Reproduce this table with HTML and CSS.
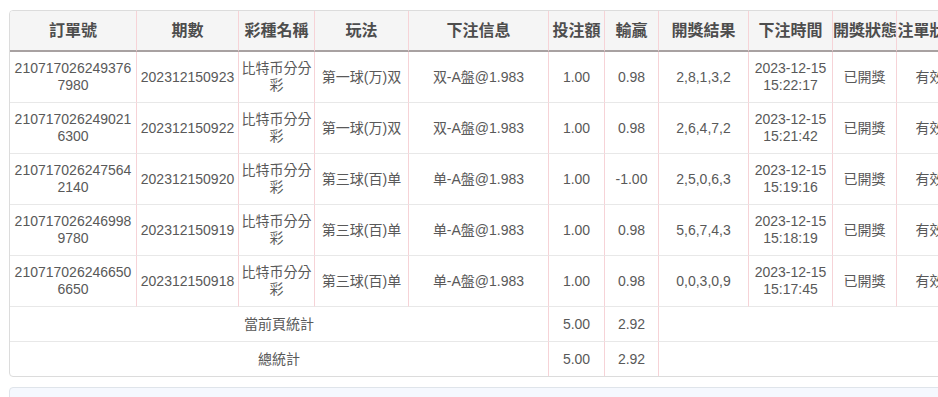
FILE: index.html
```html
<!DOCTYPE html>
<html lang="zh-Hant">
<head>
<meta charset="utf-8">
<title>注單列表</title>
<link rel="stylesheet" href="styles.css">
</head>
<body>
<div class="page">
  <div class="grid-box">
    <table class="grid">
      <colgroup>
        <col class="w-order"><col class="w-issue"><col class="w-lottery"><col class="w-play"><col class="w-info"><col class="w-amount"><col class="w-win"><col class="w-result"><col class="w-time"><col class="w-draw"><col class="w-state">
      </colgroup>
      <thead>
        <tr>
          <th>訂單號</th><th>期數</th><th>彩種名稱</th><th>玩法</th><th>下注信息</th><th>投注額</th><th>輸贏</th><th>開獎結果</th><th>下注時間</th><th>開獎狀態</th><th class="last">注單狀態</th>
        </tr>
      </thead>
      <tbody>
        <tr>
          <td class="brk">2107170262493767980</td><td>202312150923</td><td class="tight">比特币分分彩</td><td>第一球(万)双</td><td>双-A盤@1.983</td><td>1.00</td><td>0.98</td><td>2,8,1,3,2</td><td>2023-12-15 15:22:17</td><td>已開獎</td><td class="last">有效</td>
        </tr>
        <tr>
          <td class="brk">2107170262490216300</td><td>202312150922</td><td class="tight">比特币分分彩</td><td>第一球(万)双</td><td>双-A盤@1.983</td><td>1.00</td><td>0.98</td><td>2,6,4,7,2</td><td>2023-12-15 15:21:42</td><td>已開獎</td><td class="last">有效</td>
        </tr>
        <tr>
          <td class="brk">2107170262475642140</td><td>202312150920</td><td class="tight">比特币分分彩</td><td>第三球(百)单</td><td>单-A盤@1.983</td><td>1.00</td><td>-1.00</td><td>2,5,0,6,3</td><td>2023-12-15 15:19:16</td><td>已開獎</td><td class="last">有效</td>
        </tr>
        <tr>
          <td class="brk">2107170262469989780</td><td>202312150919</td><td class="tight">比特币分分彩</td><td>第三球(百)单</td><td>单-A盤@1.983</td><td>1.00</td><td>0.98</td><td>5,6,7,4,3</td><td>2023-12-15 15:18:19</td><td>已開獎</td><td class="last">有效</td>
        </tr>
        <tr>
          <td class="brk">2107170262466506650</td><td>202312150918</td><td class="tight">比特币分分彩</td><td>第三球(百)单</td><td>单-A盤@1.983</td><td>1.00</td><td>0.98</td><td>0,0,3,0,9</td><td>2023-12-15 15:17:45</td><td>已開獎</td><td class="last">有效</td>
        </tr>
        <tr class="sum">
          <td colspan="5">當前頁統計</td><td>5.00</td><td>2.92</td><td colspan="4" class="last"></td>
        </tr>
        <tr class="sum final">
          <td colspan="5">總統計</td><td>5.00</td><td>2.92</td><td colspan="4" class="last"></td>
        </tr>
      </tbody>
    </table>
  </div>
  <div class="pager-box"></div>
</div>
</body>
</html>
```
FILE: styles.css
```css
html, body {
  margin: 0;
  padding: 0;
  overflow: hidden;
  background: #ffffff;
}

.page {
  padding: 10px 0 0 9px;
  width: 1100px;
}

.grid-box {
  display: inline-block;
  border: 1px solid #dcdcdc;
  border-radius: 4px;
  overflow: hidden;
  vertical-align: top;
}

.grid {
  width: 952px;
  table-layout: fixed;
  border-collapse: separate;
  border-spacing: 0;
  font-family: "Liberation Sans", Arial, "Noto Sans CJK TC", sans-serif;
  font-size: 14px;
  color: #595959;
}

.w-order { width: 127px; }
.w-issue { width: 102px; }
.w-lottery { width: 76px; }
.w-play { width: 94px; }
.w-info { width: 140px; }
.w-amount { width: 56px; }
.w-win { width: 54px; }
.w-result { width: 90px; }
.w-time { width: 84px; }
.w-draw { width: 64px; }
.w-state { width: 65px; }

.grid th {
  background: #f5f5f5;
  font-size: 16px;
  font-weight: bold;
  color: #4d4d4d;
  line-height: 19px;
  padding: 10px 0;
  text-align: center;
  white-space: nowrap;
  overflow: hidden;
  border-right: 1px solid #f6d3d7;
  border-bottom: 2px solid #a8a1a1;
}

.grid td {
  line-height: 17px;
  padding: 8px 2px;
  text-align: center;
  vertical-align: middle;
  border-right: 1px solid #f6d3d7;
  border-bottom: 1px solid #e8e8e8;
}

.grid td.tight {
  padding-left: 0;
  padding-right: 0;
}

.grid .last {
  border-right: none;
}

.grid td.brk {
  word-break: break-all;
}

.grid tr.sum td {
  padding: 9px 2px 8px;
}

.grid tr.final td {
  border-bottom: none;
}

.pager-box {
  margin-top: 10px;
  height: 60px;
  background: #f5f8fe;
  border: 1px solid #dfe4ea;
  border-radius: 4px;
}
```
